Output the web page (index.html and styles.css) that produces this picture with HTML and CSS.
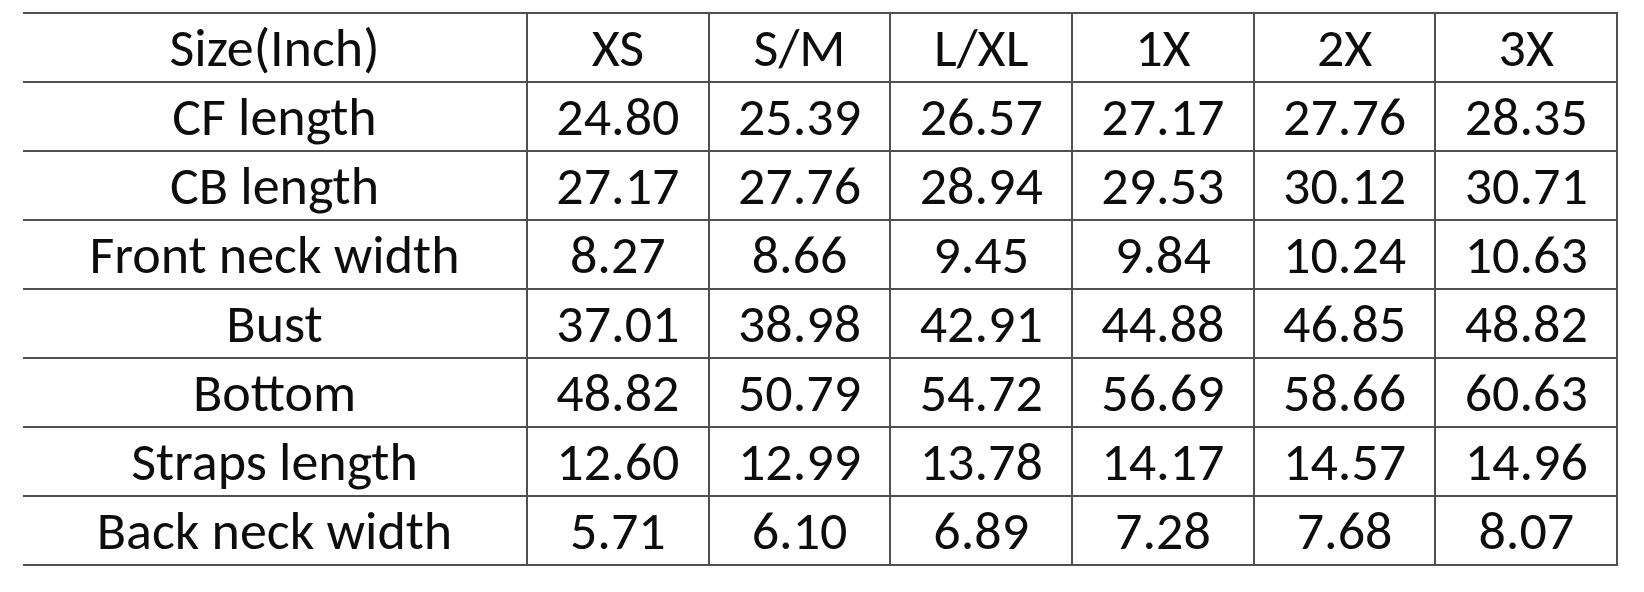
FILE: index.html
```html
<!DOCTYPE html>
<html lang="en">
<head>
<meta charset="utf-8">
<title>Size chart</title>
<link rel="stylesheet" href="styles.css">
</head>
<body>
<table class="size-table">
  <colgroup>
    <col class="col-label">
    <col class="col-size"><col class="col-size"><col class="col-size">
    <col class="col-size"><col class="col-size"><col class="col-size">
  </colgroup>
  <tbody>
    <tr><td>Size(Inch)</td><td>XS</td><td>S/M</td><td>L/XL</td><td>1X</td><td>2X</td><td>3X</td></tr>
    <tr><td>CF length</td><td>24.80</td><td>25.39</td><td>26.57</td><td>27.17</td><td>27.76</td><td>28.35</td></tr>
    <tr><td>CB length</td><td>27.17</td><td>27.76</td><td>28.94</td><td>29.53</td><td>30.12</td><td>30.71</td></tr>
    <tr><td>Front neck width</td><td>8.27</td><td>8.66</td><td>9.45</td><td>9.84</td><td>10.24</td><td>10.63</td></tr>
    <tr><td>Bust</td><td>37.01</td><td>38.98</td><td>42.91</td><td>44.88</td><td>46.85</td><td>48.82</td></tr>
    <tr><td>Bottom</td><td>48.82</td><td>50.79</td><td>54.72</td><td>56.69</td><td>58.66</td><td>60.63</td></tr>
    <tr><td>Straps length</td><td>12.60</td><td>12.99</td><td>13.78</td><td>14.17</td><td>14.57</td><td>14.96</td></tr>
    <tr><td>Back neck width</td><td>5.71</td><td>6.10</td><td>6.89</td><td>7.28</td><td>7.68</td><td>8.07</td></tr>
  </tbody>
</table>
</body>
</html>
```
FILE: styles.css
```css
html, body {
  margin: 0;
  padding: 0;
  background: #ffffff;
}

body {
  padding: 12px 0 0 23px;
}

.size-table {
  border-collapse: collapse;
  table-layout: fixed;
  width: 1594px;
  font-family: Carlito, Lato, "Open Sans", sans-serif;
  font-size: 54px;
  color: #0d0d0d;
}

.col-label {
  width: 504px;
}

.col-size {
  width: 181.7px;
}

.size-table td {
  height: 67px;
  padding: 0;
  text-align: center;
  vertical-align: middle;
  line-height: 1;
  border: 2px solid #505050;
  white-space: nowrap;
}

.size-table td:first-child {
  border-left: none;
}
```
